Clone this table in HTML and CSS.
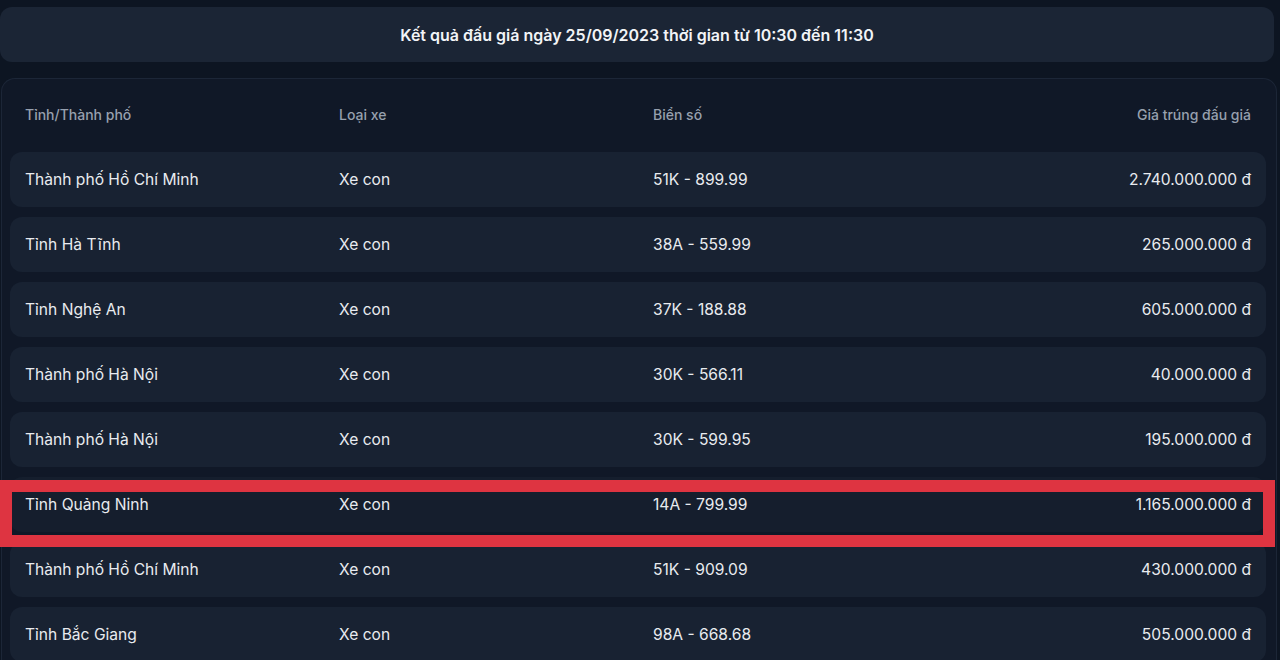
FILE: index.html
```html
<!DOCTYPE html>
<html lang="vi">
<head>
<meta charset="utf-8">
<title>Kết quả đấu giá</title>
<link rel="stylesheet" href="styles.css">
</head>
<body>
<div class="page">
  <div class="title-box">Kết quả đấu giá ngày 25/09/2023 thời gian từ 10:30 đến 11:30</div>
  <div class="card">
    <div class="row head">
      <div class="cell">Tỉnh/Thành phố</div>
      <div class="cell">Loại xe</div>
      <div class="cell">Biển số</div>
      <div class="cell right">Giá trúng đấu giá</div>
    </div>
    <div class="row item">
      <div class="cell">Thành phố Hồ Chí Minh</div>
      <div class="cell">Xe con</div>
      <div class="cell">51K - 899.99</div>
      <div class="cell right">2.740.000.000 đ</div>
    </div>
    <div class="row item">
      <div class="cell">Tỉnh Hà Tĩnh</div>
      <div class="cell">Xe con</div>
      <div class="cell">38A - 559.99</div>
      <div class="cell right">265.000.000 đ</div>
    </div>
    <div class="row item">
      <div class="cell">Tỉnh Nghệ An</div>
      <div class="cell">Xe con</div>
      <div class="cell">37K - 188.88</div>
      <div class="cell right">605.000.000 đ</div>
    </div>
    <div class="row item">
      <div class="cell">Thành phố Hà Nội</div>
      <div class="cell">Xe con</div>
      <div class="cell">30K - 566.11</div>
      <div class="cell right">40.000.000 đ</div>
    </div>
    <div class="row item">
      <div class="cell">Thành phố Hà Nội</div>
      <div class="cell">Xe con</div>
      <div class="cell">30K - 599.95</div>
      <div class="cell right">195.000.000 đ</div>
    </div>
    <div class="row item marked">
      <div class="cell">Tỉnh Quảng Ninh</div>
      <div class="cell">Xe con</div>
      <div class="cell">14A - 799.99</div>
      <div class="cell right">1.165.000.000 đ</div>
    </div>
    <div class="row item">
      <div class="cell">Thành phố Hồ Chí Minh</div>
      <div class="cell">Xe con</div>
      <div class="cell">51K - 909.09</div>
      <div class="cell right">430.000.000 đ</div>
    </div>
    <div class="row item">
      <div class="cell">Tỉnh Bắc Giang</div>
      <div class="cell">Xe con</div>
      <div class="cell">98A - 668.68</div>
      <div class="cell right">505.000.000 đ</div>
    </div>
  </div>
  <div class="highlight"></div>
</div>
</body>
</html>
```

FILE: styles.css
```css
html, body {
  margin: 0;
  padding: 0;
  background: #0d1522;
  height: 660px;
  overflow: hidden;
}
body {
  font-family: Inter, "Noto Sans", sans-serif;
  color: #e6e9ee;
}
.page {
  position: relative;
  width: 1280px;
  height: 660px;
  padding-top: 7px;
  box-sizing: border-box;
}
.title-box {
  width: 1274px;
  height: 55px;
  background: #1b2535;
  border-radius: 12px;
  display: flex;
  align-items: center;
  justify-content: center;
  font-weight: 600;
  font-size: 16px;
  color: #f2f4f7;
  box-sizing: border-box;
}
.card {
  margin-top: 16px;
  margin-left: 1px;
  width: 1276px;
  border: 1px solid #1c2637;
  border-bottom: none;
  border-radius: 14px 14px 0 0;
  background: #101827;
  padding: 8px 8px 0 8px;
  box-sizing: border-box;
  display: flex;
  flex-direction: column;
  gap: 10px;
  height: 600px;
}
.row {
  display: grid;
  grid-template-columns: repeat(4, 1fr);
  align-items: center;
  height: 55px;
  width: 1256px;
  flex-shrink: 0;
}
.cell {
  padding: 0 15px;
  white-space: nowrap;
}
.cell.right {
  text-align: right;
}
.head {
  font-size: 14px;
  font-weight: 500;
  color: #97a0ae;
}
.item {
  background: #182232;
  border-radius: 12px;
  font-size: 15.6px;
  color: #e8ebef;
}
.item.marked {
  background: #151e2d;
}
.highlight {
  position: absolute;
  left: 0;
  top: 480px;
  width: 1275px;
  height: 67px;
  border: 12px solid #de3441;
  box-sizing: border-box;
  pointer-events: none;
}
```
